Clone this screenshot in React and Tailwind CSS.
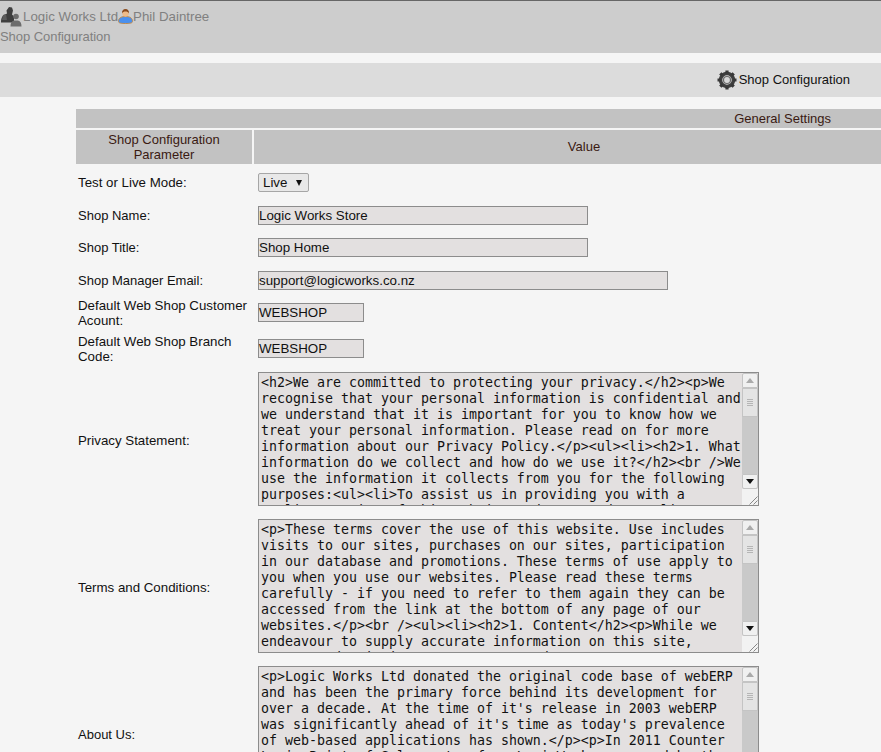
import React from 'react';

const PRIVACY = [
  '<h2>We are committed to protecting your privacy.</h2><p>We',
  'recognise that your personal information is confidential and',
  'we understand that it is important for you to know how we',
  'treat your personal information. Please read on for more',
  'information about our Privacy Policy.</p><ul><li><h2>1. What',
  'information do we collect and how do we use it?</h2><br />We',
  'use the information it collects from you for the following',
  'purposes:<ul><li>To assist us in providing you with a',
  'quality service of this website and our products</li>',
];

const TERMS = [
  '<p>These terms cover the use of this website. Use includes',
  'visits to our sites, purchases on our sites, participation',
  'in our database and promotions. These terms of use apply to',
  'you when you use our websites. Please read these terms',
  'carefully - if you need to refer to them again they can be',
  'accessed from the link at the bottom of any page of our',
  'websites.</p><br /><ul><li><h2>1. Content</h2><p>While we',
  'endeavour to supply accurate information on this site,',
  'errors and omissions may occur. We do not accept any</p>',
];

const ABOUT = [
  '<p>Logic Works Ltd donated the original code base of webERP',
  'and has been the primary force behind its development for',
  'over a decade. At the time of it\'s release in 2003 webERP',
  'was significantly ahead of it\'s time as today\'s prevalence',
  'of web-based applications has shown.</p><p>In 2011 Counter',
  'Logic Point of Sale system from LogicWorks was used by the',
];

function CompanyIcon() {
  return (
    <svg width="23" height="21" viewBox="0 0 23 21" className="shrink-0">
      <path d="M9 1l3 .5 1 3-1 4 2 2v6H1c0-4 1-7 4-8l2-1-.5-3z" fill="#3f3f3f" />
      <path d="M3 9l3-1 1 6H2z" fill="#5c5c5c" />
      <circle cx="16" cy="10.500" r="2.800" fill="#6e6e6e" />
      <path d="M10.500 20.500c0-3.500 1-5.500 3.500-6h4c2.500.5 3.500 2.500 3.500 6z" fill="#6c6c6c" />
    </svg>
  );
}

function UserIcon() {
  return (
    <svg width="15" height="15" viewBox="0 0 15 15" className="shrink-0">
      <path d="M.5 12.500c0-3.500 2.500-5 7-5s7 1.500 7 5c0 1.500-2.500 2-7 2s-7-.5-7-2z" fill="#4a90ee" stroke="#c08a4a" strokeWidth="1" />
      <circle cx="7.500" cy="4.500" r="3.200" fill="#eebb88" />
      <path d="M4 4.500C3.800 1.500 5.200 0 7.500 0s3.700 1.500 3.500 4.500C10.300 3 9 2.500 7.500 2.500S4.700 3 4 4.500z" fill="#8a4a1c" />
    </svg>
  );
}

function GearIcon() {
  return (
    <svg width="20" height="20" viewBox="0 0 20 20" className="shrink-0">
      <circle cx="10" cy="10" r="6.500" fill="none" stroke="#3f3f3f" strokeWidth="3.500" />
      <g stroke="#383838" strokeWidth="3.200">
        <path d="M10 .5v3M10 16.500v3M.5 10h3M16.500 10h3" />
        <path d="M3.300 3.300l2.200 2.200M14.500 14.500l2.200 2.200M3.300 16.700l2.200-2.200M14.500 5.500l2.200-2.200" />
      </g>
      <circle cx="10" cy="10" r="3.500" fill="#d8d8d8" stroke="#6a6a6a" strokeWidth="1.200" />
    </svg>
  );
}

function Scrollbar() {
  return (
    <div className="w-[16px] shrink-0 flex flex-col">
      <div className="h-[15px] bg-[#f0f0f0] border border-[#c4c4c4] rounded-t-[2px] flex items-center justify-center">
        <div className="w-0 h-0 border-x-[4px] border-x-transparent border-b-[5px] border-b-[#aaaaaa]" />
      </div>
      <div className="flex-1 flex flex-col bg-[#c9c9c9]">
        <div className="h-[29px] bg-[#e4e4e4] border border-[#c4c4c4] flex flex-col items-center justify-center gap-[1px]">
          <div className="w-[6px] h-px bg-[#b5b5b5]" />
          <div className="w-[6px] h-px bg-[#b5b5b5]" />
          <div className="w-[6px] h-px bg-[#b5b5b5]" />
          <div className="w-[6px] h-px bg-[#b5b5b5]" />
        </div>
      </div>
      <div className="h-[15px] bg-[#f0f0f0] border border-[#c4c4c4] rounded-b-[2px] flex items-center justify-center">
        <div className="w-0 h-0 border-x-[4px] border-x-transparent border-t-[5px] border-t-[#111111]" />
      </div>
      <div className="h-[16px] bg-[#f2f2f2] flex items-end justify-end">
        <svg width="10" height="10" viewBox="0 0 10 10">
          <path d="M9.500 1.500l-8 8M9.500 5.500l-4 4" stroke="#888" strokeWidth="1" fill="none" />
        </svg>
      </div>
    </div>
  );
}

function TextBox({ lines }) {
  return (
    <div className="h-[134px] w-[501px] mb-[2px] flex bg-[#e3e0e0] border border-[#8c8c8c]">
      <div className="flex-1 overflow-hidden pl-[2px] pt-[2px] font-['DejaVu_Sans_Mono',monospace] text-[13.29px] leading-[16px] text-[#111]">
        {lines.map((line, i) => (
          <div key={i} className="whitespace-pre">{line}</div>
        ))}
      </div>
      <Scrollbar />
    </div>
  );
}

function TextInput({ value, width }) {
  return (
    <div className={`${width} h-[19px] bg-[#e3e0e0] border border-[#8c8c8c] text-[13.33px] leading-[17px] text-[#111]`}>
      {value}
    </div>
  );
}

function Row({ label, height, wide = false, children }) {
  return (
    <div className={`flex items-center ${height}`}>
      <div className={`w-[176px] shrink-0 px-[2px] leading-[15px] ${wide ? 'text-[13.3px]' : 'text-[13px]'}`}>{label}</div>
      <div className="pl-[6px]">{children}</div>
    </div>
  );
}

export default function App() {
  return (
    <div className="h-[752px] overflow-hidden bg-[#f5f5f5] font-['Liberation_Sans',Arial,sans-serif] text-[13px] text-[#111]">
      <header className="h-[53px] bg-[#cdcdcd] border-t border-[#666] text-[#808080]">
        <div className="flex items-center h-[26px] pt-[5px] text-[13.3px]">
          <CompanyIcon />
          <span>Logic Works Ltd</span>
          <UserIcon />
          <span>Phil Daintree</span>
        </div>
        <div className="leading-[15px] mt-[2px] tracking-[-0.05px]">Shop Configuration</div>
      </header>

      <div className="mt-[10px] h-[34px] bg-[#dcdcdc] flex items-center justify-end pr-[31px] gap-[2px]">
        <GearIcon />
        <span>Shop Configuration</span>
      </div>

      <main className="mt-[12px] ml-[76px] w-[838px]">
        <div className="h-[19px] bg-[#c2c2c2] text-[#3a1a12] flex items-center justify-end pr-[83px]">General Settings</div>
        <div className="mt-[2px] flex gap-[2px] h-[34px] text-[#3a1a12]">
          <div className="w-[176px] bg-[#c2c2c2] flex items-center justify-center text-center leading-[15px]">
            Shop Configuration<br />Parameter
          </div>
          <div className="flex-1 bg-[#c2c2c2] flex items-center justify-center">Value</div>
        </div>

        <Row label="Test or Live Mode:" height="h-[36px]" wide>
          <div className="w-[51px] h-[19px] mt-[1px] bg-[#e8e8e8] border border-[#a6a6a6] rounded-[2px] flex items-center pl-[4px] text-[13.33px]">
            <span>Live</span>
            <span className="ml-[9px] w-0 h-0 border-x-[3px] border-x-transparent border-t-[6px] border-t-[#111]" />
          </div>
        </Row>
        <Row label="Shop Name:" height="h-[31px]"><TextInput value="Logic Works Store" width="w-[330px]" /></Row>
        <Row label="Shop Title:" height="h-[33px]"><TextInput value="Shop Home" width="w-[330px]" /></Row>
        <Row label="Shop Manager Email:" height="h-[33px]"><TextInput value="support@logicworks.co.nz" width="w-[410px]" /></Row>
        <Row label={<>Default Web Shop Customer<br />Acount:</>} height="h-[31px]" wide><TextInput value="WEBSHOP" width="w-[106px]" /></Row>
        <Row label={<>Default Web Shop Branch<br />Code:</>} height="h-[41px]" wide><TextInput value="WEBSHOP" width="w-[106px]" /></Row>
        <Row label="Privacy Statement:" height="h-[142px]" wide><TextBox lines={PRIVACY} /></Row>
        <Row label="Terms and Conditions:" height="h-[152px]" wide><TextBox lines={TERMS} /></Row>
        <Row label="About Us:" height="h-[142px]"><TextBox lines={ABOUT} /></Row>
      </main>
    </div>
  );
}
